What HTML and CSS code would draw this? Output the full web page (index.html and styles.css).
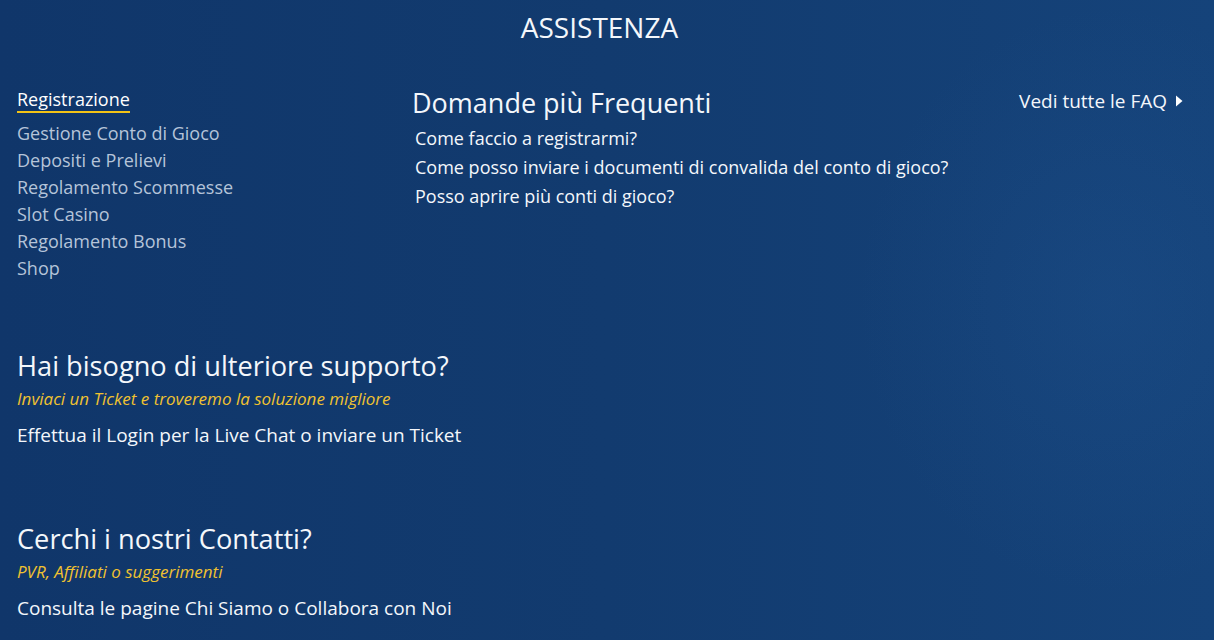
FILE: index.html
```html
<!DOCTYPE html>
<html lang="it">
<head>
<meta charset="utf-8">
<title>Assistenza</title>
<link rel="stylesheet" href="styles.css">
</head>
<body>
<div class="page">
  <h1 class="title">ASSISTENZA</h1>
  <div class="top">
    <nav class="menu">
      <a class="menu-item active">Registrazione</a>
      <a class="menu-item">Gestione Conto di Gioco</a>
      <a class="menu-item">Depositi e Prelievi</a>
      <a class="menu-item">Regolamento Scommesse</a>
      <a class="menu-item">Slot Casino</a>
      <a class="menu-item">Regolamento Bonus</a>
      <a class="menu-item">Shop</a>
    </nav>
    <div class="faq">
      <h2 class="faq-title">Domande più Frequenti</h2>
      <a class="faq-item">Come faccio a registrarmi?</a>
      <a class="faq-item">Come posso inviare i documenti di convalida del conto di gioco?</a>
      <a class="faq-item">Posso aprire più conti di gioco?</a>
    </div>
    <a class="all-faq">Vedi tutte le FAQ <svg class="arrow" width="8" height="12" viewBox="0 0 8 12"><path d="M1 0.5 L7.5 6 L1 11.5 Z" fill="#ffffff"/></svg></a>
  </div>
  <section class="block first">
    <h2 class="block-title">Hai bisogno di ulteriore supporto?</h2>
    <p class="block-sub">Inviaci un Ticket e troveremo la soluzione migliore</p>
    <p class="block-text">Effettua il Login per la Live Chat o inviare un Ticket</p>
  </section>
  <section class="block second">
    <h2 class="block-title">Cerchi i nostri Contatti?</h2>
    <p class="block-sub">PVR, Affiliati o suggerimenti</p>
    <p class="block-text">Consulta le pagine Chi Siamo o Collabora con Noi</p>
  </section>
</div>
</body>
</html>
```
FILE: styles.css
```css
html, body {
  margin: 0;
  padding: 0;
  height: 100%;
}
body {
  font-family: "Open Sans", "Noto Sans", sans-serif;
  color: #f4f7fb;
  background:
    radial-gradient(ellipse 360px 420px at 1110px 300px, rgba(40, 95, 160, 0.18), rgba(40, 95, 160, 0) 70%),
    linear-gradient(to right, #10366a 0%, #123b6f 50%, #15437a 100%);
  overflow: hidden;
}
.page {
  padding: 0 17px;
}
.title {
  margin: 0;
  padding-right: 15px;
  text-align: center;
  font-weight: 400;
  font-size: 28px;
  line-height: 54px;
  letter-spacing: 0;
}
.top {
  display: flex;
  align-items: flex-start;
  margin-top: 32px;
}
.menu {
  width: 395px;
  display: flex;
  flex-direction: column;
  align-items: flex-start;
}
.menu-item {
  font-size: 18px;
  line-height: 27px;
  color: #b5c4d9;
}
.menu-item.active {
  color: #ffffff;
  line-height: 24px;
  margin-top: 1px;
  margin-bottom: 7px;
  border-bottom: 2px solid #f3c316;
}
.faq {
  flex: 1;
  display: flex;
  flex-direction: column;
  align-items: flex-start;
}
.faq-title {
  margin: 0 0 4px;
  font-weight: 400;
  font-size: 27px;
  line-height: 34px;
}
.faq-item {
  padding-left: 3px;
  font-size: 18px;
  line-height: 29px;
}
.all-faq {
  margin-right: 14px;
  font-size: 19px;
  line-height: 30px;
  display: flex;
  align-items: center;
  gap: 8px;
}
.arrow {
  display: block;
}
.block-title {
  margin: 0;
  font-weight: 400;
  font-size: 27.2px;
  line-height: 36px;
}
.block-sub {
  margin: 4px 0 0;
  font-style: italic;
  font-size: 17px;
  line-height: 22px;
  color: #f0c230;
}
.block-text {
  margin: 12px 0 0;
  font-size: 19px;
  line-height: 26px;
}
.block.first {
  margin-top: 66px;
}
.block.second {
  margin-top: 73px;
}
```
